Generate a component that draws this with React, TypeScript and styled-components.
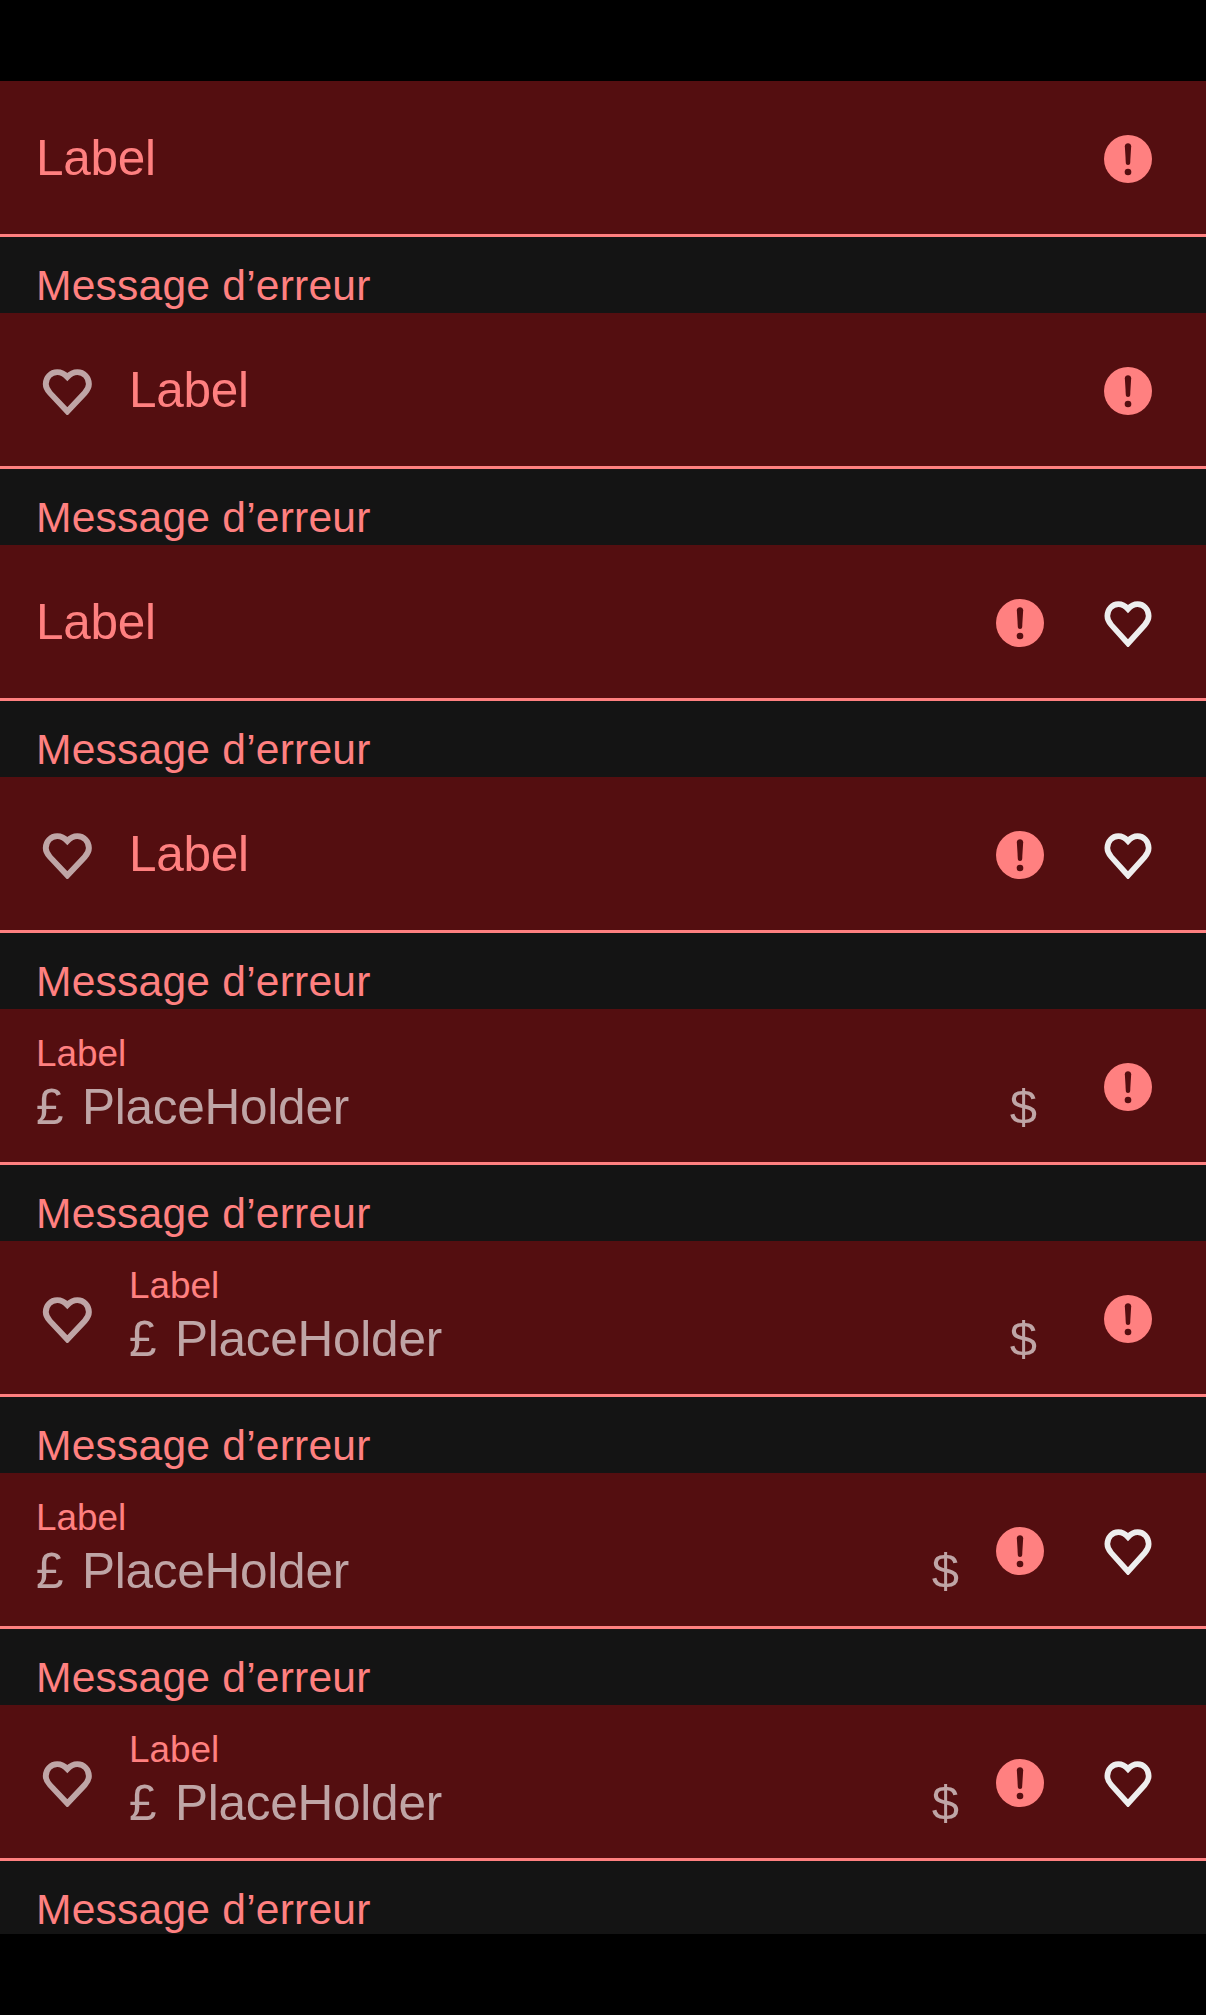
import React from 'react';
import styled, { createGlobalStyle } from 'styled-components';

const color = {
  field: '#540e10',
  surface: '#141414',
  error: '#ff8080',
  muted: '#bfa5a6',
  strong: '#eeeeee',
};

const GlobalStyle = createGlobalStyle`
  body {
    margin: 0;
    background: #000;
    font-family: 'Liberation Sans', Arial, sans-serif;
  }
`;

const Page = styled.main`
  box-sizing: border-box;
  width: 1206px;
  height: 2015px;
  padding: 81px 0;
  overflow: hidden;
  background: #000;
`;

const List = styled.div`
  height: 1853px;
  overflow: hidden;
  background: ${color.surface};
`;

const Field = styled.div`
  box-sizing: border-box;
  display: flex;
  height: 156px;
  padding: 0 54px 0 36px;
  background: ${color.field};
  border-bottom: 3px solid ${color.error};
`;

const Leading = styled.div`
  display: flex;
  align-items: flex-start;
  width: 93px;
  padding-top: 54px;
`;

const Content = styled.div`
  flex: 1;
  display: flex;
  flex-direction: column;
`;

const Label = styled.span`
  padding-top: 47px;
  font-size: 49.5px;
  line-height: 60px;
  letter-spacing: -0.3px;
  color: ${color.error};
`;

const SmallLabel = styled.span`
  padding-top: 23px;
  font-size: 36.9px;
  line-height: 43px;
  color: ${color.error};
`;

const ValueRow = styled.div<{ $gap: number }>`
  display: flex;
  height: 60px;
  margin-top: 2px;
  padding-right: ${(p) => p.$gap}px;
  font-size: 49.5px;
  line-height: 60px;
  color: ${color.muted};
`;

const Prefix = styled.span`
  width: 46px;
`;

const Value = styled.span`
  flex: 1;
  letter-spacing: -0.25px;
`;

const Suffix = styled.span`
  font-size: 49px;
`;

const Trailing = styled.div`
  display: flex;
  align-items: flex-start;
  gap: 60px;
  padding-top: 54px;
`;

const Message = styled.div`
  box-sizing: border-box;
  height: 76px;
  padding: 21px 36px 0;
  font-size: 42.6px;
  line-height: 54px;
  letter-spacing: 0.2px;
  white-space: nowrap;
  color: ${color.error};
`;

const Svg = styled.svg`
  display: block;
  flex: none;
`;

function Heart({ wide }: { wide?: boolean }) {
  return (
    <Svg
      width={wide ? 62 : 48}
      height="48"
      viewBox={wide ? '-93 0 186 144' : '-72 0 144 144'}
      fill="none"
      stroke={wide ? color.muted : color.strong}
      strokeWidth="17"
    >
      <path
        transform={wide ? 'translate(1 0) scale(1.043 1)' : undefined}
        d="M0 30C-8 21-18 15.5-29 15.5C-47.5 15.5-62 31-62 51C-62 61-57 70-50 78L0 133.5L50 78C57 70 62 61 62 51C62 31 47.5 15.5 29 15.5C18 15.5 8 21 0 30Z"
      />
    </Svg>
  );
}

function Alert() {
  return (
    <Svg width="48" height="48" viewBox="0 0 144 144">
      <circle cx="72" cy="72" r="72" fill={color.error} />
      <path
        fill={color.field}
        d="M62.5 33.5C62.5 28 67 24.5 72 24.5C77 24.5 81.5 28 81.5 33.5L78.5 84C78.2 88 76 90 72 90C68 90 65.8 88 65.5 84Z"
      />
      <circle cx="72" cy="111" r="10" fill={color.field} />
    </Svg>
  );
}

interface InputProps {
  leading?: boolean;
  trailing?: boolean;
  filled?: boolean;
}

function ErrorInput({ leading, trailing, filled }: InputProps) {
  return (
    <>
      <Field>
        {leading && (
          <Leading>
            <Heart wide />
          </Leading>
        )}
        <Content>
          {filled ? (
            <>
              <SmallLabel>Label</SmallLabel>
              <ValueRow $gap={trailing ? 37 : 67}>
                <Prefix>£</Prefix>
                <Value>PlaceHolder</Value>
                <Suffix>$</Suffix>
              </ValueRow>
            </>
          ) : (
            <Label>Label</Label>
          )}
        </Content>
        <Trailing>
          <Alert />
          {trailing && <Heart />}
        </Trailing>
      </Field>
      <Message>Message d’erreur</Message>
    </>
  );
}

const inputs: InputProps[] = [
  {},
  { leading: true },
  { trailing: true },
  { leading: true, trailing: true },
  { filled: true },
  { filled: true, leading: true },
  { filled: true, trailing: true },
  { filled: true, leading: true, trailing: true },
];

export default function App() {
  return (
    <Page>
      <GlobalStyle />
      <List>
        {inputs.map((input, i) => (
          <ErrorInput key={i} {...input} />
        ))}
      </List>
    </Page>
  );
}
